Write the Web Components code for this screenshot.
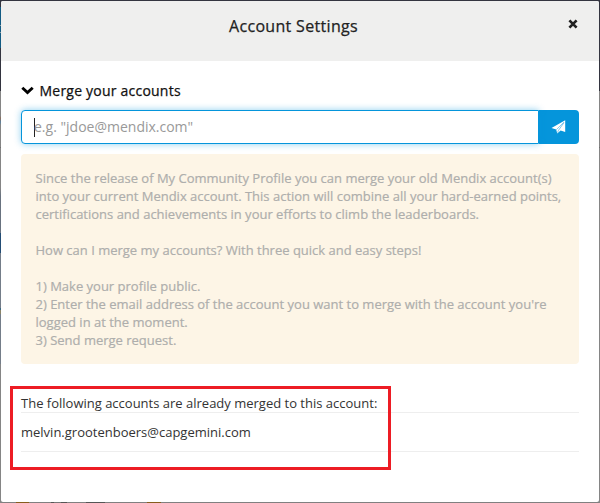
<!DOCTYPE html>
<html lang="en">
<head>
<meta charset="utf-8">
<title>Account Settings</title>
<style>
html,body{margin:0;height:100%;overflow:hidden}
body{font-family:"Open Sans","Noto Sans",sans-serif;color:#333;font-size:13px;line-height:18px}
</style>
</head>
<body>
<page-backdrop>
  <settings-dialog>
    <span slot="title">Account Settings</span>
    <section-heading>Merge your accounts</section-heading>
    <email-field placeholder='e.g. "jdoe@mendix.com"'></email-field>
    <info-notice>Since the release of My Community Profile you can merge your old Mendix account(s)<br>into your current Mendix account. This action will combine all your hard-earned points,<br>certifications and achievements in your efforts to climb the leaderboards.<br><br>How can I merge my accounts? With three quick and easy steps!<br><br>1) Make your profile public.<br>2) Enter the email address of the account you want to merge with the account you're<br>logged in at the moment.<br>3) Send merge request.</info-notice>
    <merged-accounts>
      <span slot="label">The following accounts are already merged to this account:</span>
      <span slot="account">melvin.grootenboers@capgemini.com</span>
    </merged-accounts>
  </settings-dialog>
</page-backdrop>
<script>
function define(name, html) {
  customElements.define(name, class extends HTMLElement {
    constructor() {
      super();
      this.attachShadow({mode: 'open'}).innerHTML = html;
    }
    connectedCallback() {
      const ph = this.shadowRoot.querySelector('[data-placeholder]');
      if (ph) ph.textContent = this.getAttribute('placeholder');
    }
  });
}

define('page-backdrop', `<style>
:host{display:block;box-sizing:border-box;width:600px;height:503px;padding:1px;
background:
 linear-gradient(90deg,transparent 16px,#865d1d 16px 29px,transparent 29px 51px,#555 51px 54px,#777 54px 61px,#555 61px 67px,transparent 67px 86px,#555 86px 105px,transparent 105px 147px,#865d1d 147px 161px,transparent 161px) 0 502px/600px 1px no-repeat,
 linear-gradient(#33343f 0 7px,#125b83 7px 25px,#8799a3 25px 26px,#125b83 26px 32px,#8799a3 32px 33px,#125b83 33px 48px,#33343f 48px 91px,#858585 91px 116px,#8a6d5a 118px,#5b7f9c 122px,#858585 125px 147px,#707070 147px 148px,#858585 148px 188px,#68727f 196px 233px,#234d75 233px 253px,#747d89 253px 308px,#3c6880 308px 310px,#8a8468 310px 314px,#747d89 314px 364px,#858585 364px) 0 0/1px 503px no-repeat,
 linear-gradient(#33343f 0 91px,#858585 91px 147px,#707070 147px 148px,#858585 148px) 599px 0/1px 503px no-repeat,
 linear-gradient(#33343f 0 50%,#808080 50%)}
</style><slot></slot>`);

define('settings-dialog', `<style>
:host{display:flex;flex-direction:column;height:501px;background:#fff;border-radius:2px;overflow:hidden}
header{flex:none;box-sizing:border-box;display:grid;grid-template-columns:27px 1fr 40px;height:60px;padding:0 6px;background:#efefee}
h1{margin:0;padding-top:13px;text-align:center;font-size:16px;line-height:24px;font-weight:400;letter-spacing:.32px;color:#222;-webkit-text-stroke:.25px #222}
svg{margin:17.5px 0 0 14.5px;width:10px;height:10px}
main{padding:20px 20px 0}
</style>
<header><i></i><h1><slot name="title"></slot></h1>
<svg viewBox="0 0 10 10"><path d="M1.4 1.4 8.6 8.6M8.6 1.4 1.4 8.6" stroke="#222" stroke-width="2.7"/></svg></header>
<main><slot></slot></main>`);

define('section-heading', `<style>
:host{display:flex;align-items:center;gap:5.5px;height:20px;color:#111;font-size:14px;line-height:20px;letter-spacing:.22px;-webkit-text-stroke:.25px #111}
svg{width:13px;height:9px;margin-top:-2px}
</style><svg viewBox="0 0 13 9"><path d="M1.3 1.7 6.5 6.5 11.7 1.7" fill="none" stroke="#000" stroke-width="2.9"/></svg><span><slot></slot></span>`);

define('email-field', `<style>
:host{display:flex;height:34px;margin-top:9px}
.input{flex:1;box-sizing:border-box;display:flex;align-items:center;padding-left:12px;border:1px solid #0595db;border-radius:4px 0 0 4px;background:#fff;box-shadow:0 0 7px rgba(5,149,219,.45);position:relative;z-index:1;font-size:14px;line-height:20px;color:#999}
.caret{width:1px;height:19px;background:#222;margin-right:-1px}
.send{flex:none;width:40px;border-radius:0 4px 4px 0;background:#0595db;display:flex;align-items:center;justify-content:center}
svg{width:15px;height:14px;margin-left:-2px}
</style><div class="input"><i class="caret"></i><span data-placeholder></span></div>
<div class="send"><svg viewBox="0 0 15 14"><path d="M14.2 .2V12L9.6 10.6 6.2 13.6 5.2 9.6 .5 8Z" fill="#fff"/><path d="M13 2.2 5.4 9.6M13 2.6 7.6 10.2 6.4 12.6" stroke="#0595db" stroke-width=".5" fill="none"/></svg></div>`);

define('info-notice', `<style>
:host{display:block;box-sizing:border-box;height:210px;margin-top:10px;padding:15px 0 0 14.5px;border-radius:4px;background:#fdf5e6;color:#aeaeac;white-space:nowrap;-webkit-text-stroke:.2px #aeaeac}
</style><slot></slot>`);

define('merged-accounts', `<style>
:host{display:block;position:relative;margin-top:30px;white-space:nowrap}
.label{height:18px;border-bottom:1px solid #eee}
.account{box-sizing:border-box;height:39px;padding-top:10px;border-bottom:1px solid #eee}
.mark{position:absolute;box-sizing:border-box;left:-11px;top:-8px;width:381px;height:84px;border:3px solid #ed1c24}
</style><div class="label"><slot name="label"></slot></div><div class="account"><slot name="account"></slot></div><div class="mark"></div>`);
</script>
</body>
</html>
